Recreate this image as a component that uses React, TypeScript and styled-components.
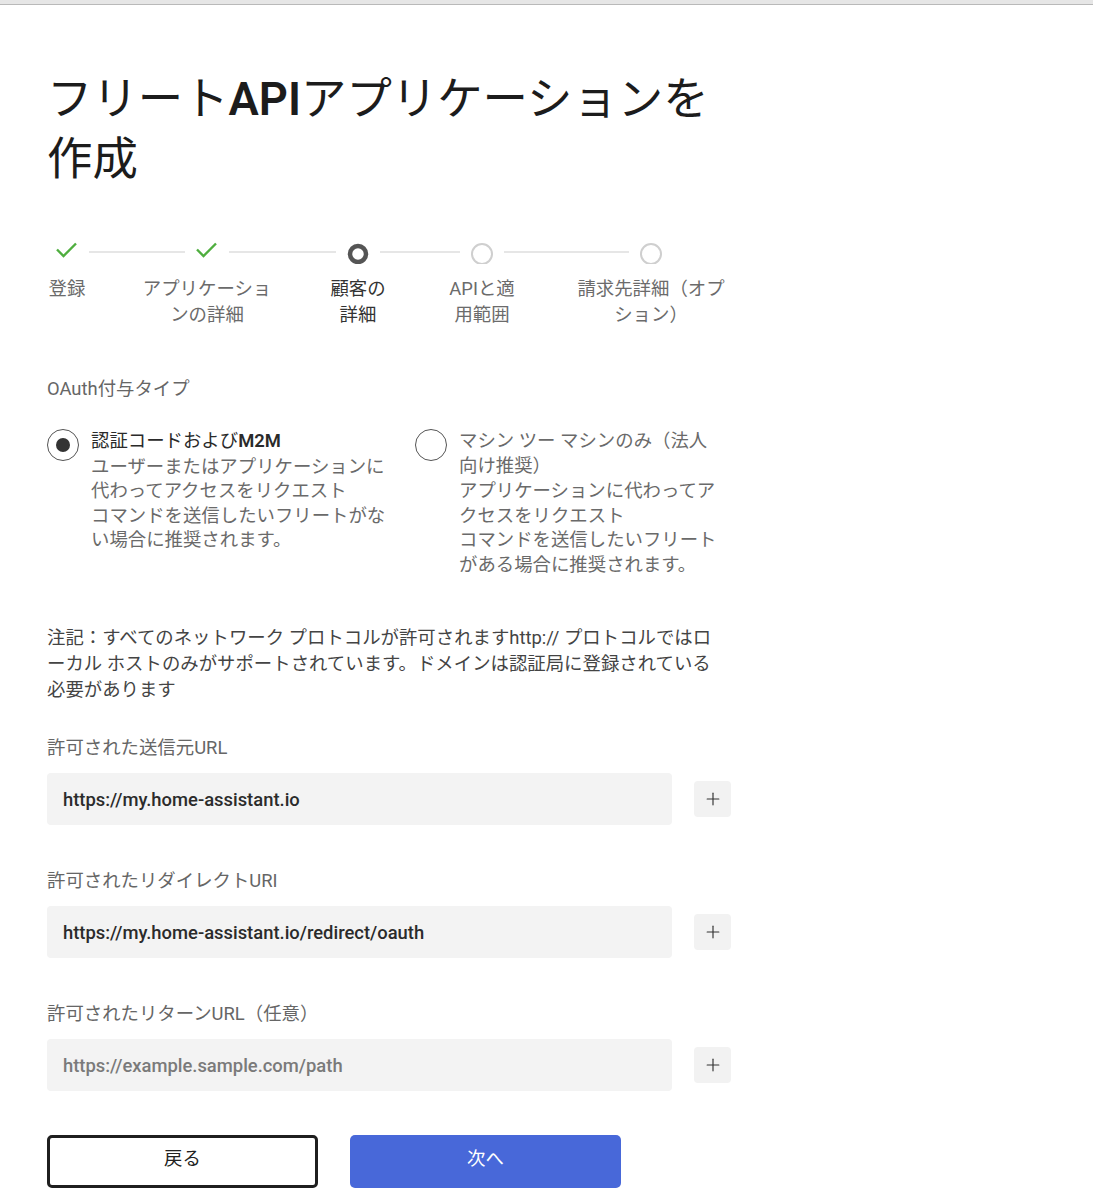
import React from "react";
import styled, { createGlobalStyle } from "styled-components";
import { Plus } from "lucide-react";

const GlobalStyle = createGlobalStyle`
  body {
    margin: 0;
    background: #fff;
    font-family: Roboto, "Noto Sans CJK JP", sans-serif;
    color: #555;
  }
`;

const TopBar = styled.div`
  height: 4px;
  background: #e6e6e6;
  border-bottom: 1px solid #b9b9b9;
`;

const Page = styled.main`
  width: 686px;
  padding: 65px 0 40px 47px;
`;

const Title = styled.h1`
  margin: 0;
  font-size: 45.4px;
  line-height: 60px;
  font-weight: 400;
  color: #1c1c1c;
`;

const Latin = styled.span<{ $weight?: number }>`
  font-weight: ${(p) => p.$weight ?? 500};
`;

const Stepper = styled.ol`
  list-style: none;
  display: flex;
  align-items: flex-start;
  margin: 50px 0 0;
  padding: 0 0 0 8px;
`;

const Step = styled.li`
  width: 24px;
  display: flex;
  flex-direction: column;
  align-items: center;
`;

const StepIcon = styled.svg`
  width: 24px;
  height: 24px;
  flex: none;
`;

const StepLabel = styled.div<{ $w: number; $active?: boolean }>`
  width: ${(p) => p.$w}px;
  flex: none;
  margin-top: 12px;
  font-size: 18.4px;
  line-height: 26px;
  text-align: center;
  color: ${(p) => (p.$active ? "#333" : "#6b6b6b")};
`;

const Connector = styled.div<{ $w: number }>`
  width: ${(p) => p.$w}px;
  flex: none;
  height: 2px;
  margin: 11px 10px 0;
  background: #e6e6e6;
`;

const SectionLabel = styled.div`
  margin-top: 48px;
  font-size: 18.4px;
  line-height: 26px;
  color: #666;
`;

const RadioGrid = styled.div`
  display: grid;
  grid-template-columns: 345px 306px;
  column-gap: 23px;
  margin-top: 27px;
`;

const RadioOption = styled.label`
  display: flex;
  gap: 12px;
  align-items: flex-start;
`;

const RadioCircle = styled.span<{ $checked?: boolean }>`
  flex: none;
  width: 32px;
  height: 32px;
  box-sizing: border-box;
  border: 1.5px solid #555;
  border-radius: 50%;
  display: flex;
  align-items: center;
  justify-content: center;

  &::after {
    content: "";
    width: 14px;
    height: 14px;
    border-radius: 50%;
    background: ${(p) => (p.$checked ? "#333" : "transparent")};
  }
`;

const RadioText = styled.div`
  font-size: 18.4px;
  line-height: 24.5px;
  color: #6a6a6a;
`;

const RadioTitle = styled.div<{ $strong?: boolean }>`
  color: ${(p) => (p.$strong ? "#2a2a2a" : "#6a6a6a")};
  margin-bottom: 1px;
`;

const Note = styled.p`
  max-width: 680px;
  margin: 48px 0 0;
  font-size: 18.4px;
  line-height: 26px;
  color: #444;
`;

const FieldLabel = styled.div<{ $first?: boolean }>`
  margin-top: ${(p) => (p.$first ? 32 : 43)}px;
  font-size: 18.4px;
  line-height: 26px;
  color: #666;
`;

const FieldRow = styled.div`
  display: grid;
  grid-template-columns: 625px 37px;
  column-gap: 22px;
  align-items: center;
  margin-top: 12px;
`;

const TextInput = styled.input`
  height: 52px;
  box-sizing: border-box;
  border: none;
  border-radius: 4px;
  background: #f3f3f3;
  padding: 0 16px;
  font-family: Roboto, "Noto Sans CJK JP", sans-serif;
  font-size: 18.4px;
  font-weight: 500;
  color: #2b2b2b;
  outline: none;

  &::placeholder {
    color: #7a7a7a;
  }
`;

const AddButton = styled.button`
  width: 37px;
  height: 36px;
  border: none;
  border-radius: 4px;
  background: #f2f2f2;
  color: #333;
  display: flex;
  align-items: center;
  justify-content: center;
  padding: 0;
`;

const Actions = styled.div`
  display: flex;
  gap: 32px;
  margin-top: 44px;
`;

const ActionButton = styled.button<{ $primary?: boolean }>`
  width: 271px;
  height: 53px;
  box-sizing: border-box;
  border-radius: 5px;
  border: ${(p) => (p.$primary ? "none" : "3px solid #1f1f1f")};
  background: ${(p) => (p.$primary ? "#4868d9" : "#fff")};
  color: ${(p) => (p.$primary ? "#fff" : "#222")};
  font-family: Roboto, "Noto Sans CJK JP", sans-serif;
  font-size: 18.4px;
  line-height: 1;
  padding: 0 0 4px;
`;

type StepState = "done" | "active" | "todo";

const steps: { label: React.ReactNode; w: number; state: StepState }[] = [
  { label: "登録", w: 40, state: "done" },
  { label: "アプリケーションの詳細", w: 135, state: "done" },
  { label: "顧客の詳細", w: 60, state: "active" },
  { label: "APIと適用範囲", w: 72, state: "todo" },
  { label: "請求先詳細（オプション）", w: 155, state: "todo" },
];

const connectors = [96, 107, 80, 125];

const StepGlyph = ({ state }: { state: StepState }) => (
  <StepIcon viewBox="0 0 24 24">
    {state === "done" && (
      <path d="M2 9.5 L8.5 16 L21 3.5" fill="none" stroke="#4fae3f" strokeWidth="2.4" />
    )}
    {state === "active" && (
      <circle cx="12" cy="14" r="8" fill="none" stroke="#555" strokeWidth="4.5" />
    )}
    {state === "todo" && (
      <circle cx="12" cy="14" r="10" fill="none" stroke="#cfcfcf" strokeWidth="2" />
    )}
  </StepIcon>
);

const fields = [
  { label: "許可された送信元URL", value: "https://my.home-assistant.io" },
  { label: "許可されたリダイレクトURI", value: "https://my.home-assistant.io/redirect/oauth" },
  { label: "許可されたリターンURL（任意）", placeholder: "https://example.sample.com/path" },
];

export default function App() {
  return (
    <>
      <GlobalStyle />
      <TopBar />
      <Page>
        <Title>
          フリート<Latin $weight={600}>API</Latin>アプリケーションを作成
        </Title>

        <Stepper>
          {steps.map((s, i) => (
            <React.Fragment key={i}>
              <Step>
                <StepGlyph state={s.state} />
                <StepLabel $w={s.w} $active={s.state === "active"}>
                  {s.label}
                </StepLabel>
              </Step>
              {i < connectors.length && <Connector $w={connectors[i]} />}
            </React.Fragment>
          ))}
        </Stepper>

        <SectionLabel>OAuth付与タイプ</SectionLabel>

        <RadioGrid>
          <RadioOption>
            <RadioCircle $checked />
            <RadioText>
              <RadioTitle $strong>
                認証コードおよび<Latin $weight={600}>M2M</Latin>
              </RadioTitle>
              ユーザーまたはアプリケーションに代わってアクセスをリクエスト
              <br />
              コマンドを送信したいフリートがない場合に推奨されます。
            </RadioText>
          </RadioOption>
          <RadioOption>
            <RadioCircle />
            <RadioText>
              <RadioTitle>マシン ツー マシンのみ（法人向け推奨）</RadioTitle>
              アプリケーションに代わってアクセスをリクエスト
              <br />
              コマンドを送信したいフリートがある場合に推奨されます。
            </RadioText>
          </RadioOption>
        </RadioGrid>

        <Note>
          注記：すべてのネットワーク プロトコルが許可されますhttp:// プロトコルではローカル
          ホストのみがサポートされています。ドメインは認証局に登録されている必要があります
        </Note>

        {fields.map((f, i) => (
          <React.Fragment key={i}>
            <FieldLabel $first={i === 0}>{f.label}</FieldLabel>
            <FieldRow>
              <TextInput defaultValue={f.value} placeholder={f.placeholder} />
              <AddButton aria-label="追加">
                <Plus size={20} strokeWidth={1.4} />
              </AddButton>
            </FieldRow>
          </React.Fragment>
        ))}

        <Actions>
          <ActionButton>戻る</ActionButton>
          <ActionButton $primary>次へ</ActionButton>
        </Actions>
      </Page>
    </>
  );
}
